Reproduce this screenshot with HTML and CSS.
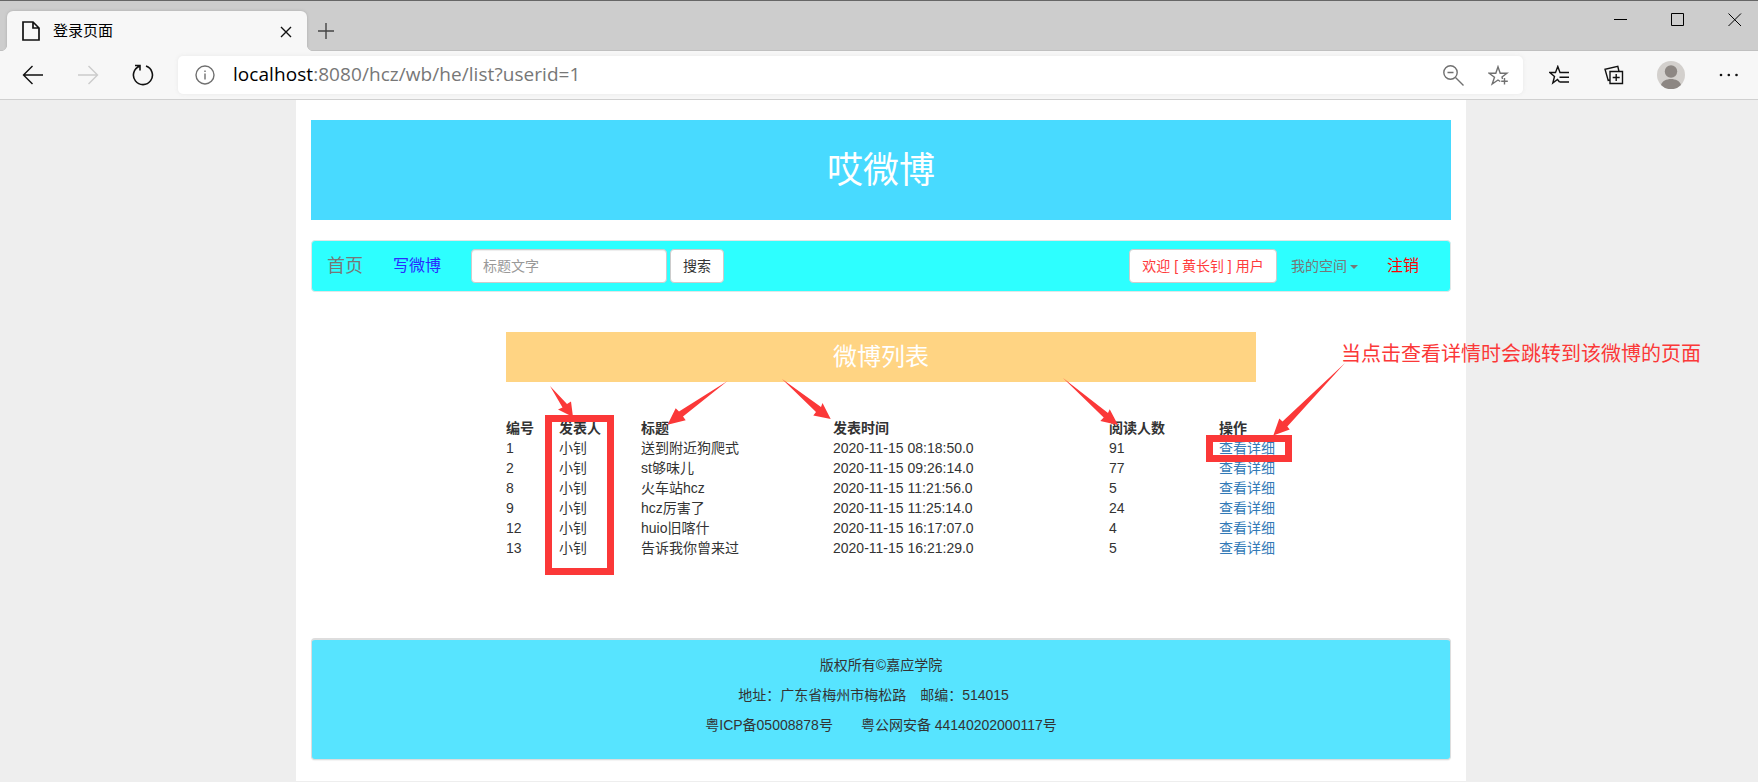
FILE: index.html
```html
<!DOCTYPE html>
<html lang="zh-CN">
<head>
	<meta charset="UTF-8">
	<title>登录页面</title>
	<link rel="stylesheet" href="styles.css">
</head>
<body>

	<!-- browser window -->
	<div class="tabbar">
		<div class="tab">
			<svg class="tab-file" width="18" height="20" viewBox="0 0 18 20"><path d="M1 1h10l6 6v12H1zM11 1v6h6"/></svg>
			<span class="tab-title">登录页面</span>
			<svg class="tab-close" width="12" height="12" viewBox="0 0 12 12"><path d="M1 1l10 10M11 1L1 11"/></svg>
		</div>
		<svg class="tab-new" width="18" height="18" viewBox="0 0 18 18"><path d="M9 1v16M1 9h16"/></svg>
		<div class="win-buttons">
			<svg width="14" height="14" viewBox="0 0 14 14"><path d="M0 6.5h13"/></svg>
			<svg width="14" height="14" viewBox="0 0 14 14"><path d="M.5 .5h12v12H.5z"/></svg>
			<svg width="14" height="14" viewBox="0 0 14 14"><path d="M.5 .5l12.5 12.5M13 .5L.5 13"/></svg>
		</div>
	</div>

	<div class="toolbar">
		<svg class="btn-back" width="22" height="20" viewBox="0 0 22 20"><path d="M21 10H1.500M10.500 1l-9 9 9 9"/></svg>
		<svg class="btn-forward" width="22" height="20" viewBox="0 0 22 20"><path d="M0 10h19.500M10.500 1l9 9-9 9"/></svg>
		<svg class="btn-reload" width="22" height="22" viewBox="0 0 22 22"><path d="M14 2.100A9.500 9.500 0 1 1 7.600 2.200M3 1.500h5v5"/></svg>
		<div class="address">
			<svg class="ico-info" width="20" height="20" viewBox="0 0 20 20"><circle cx="10" cy="10" r="9"/><path d="M10 8.500v6M10 5.500v1.500"/></svg>
			<span class="url"><b>localhost</b>:8080/hcz/wb/he/list?userid=1</span>
			<svg class="ico-zoom" width="21" height="21" viewBox="0 0 21 21"><circle cx="7.500" cy="7.500" r="6.700"/><path d="M12.500 12.500l8 8M4.500 7.500h6"/></svg>
			<svg class="ico-star" width="21" height="21" viewBox="0 0 21 21"><path d="M12.300 16.500L10 15 4.200 19 6.500 12.300 1 8.200H7.800L10 1.800 12.200 8.200H19L14 12l.5 2M16.500 13v6.500M13.200 16.300h6.600"/></svg>
		</div>
		<svg class="ico-fav" width="21" height="20" viewBox="0 0 21 20"><path d="M10.500 17L8.500 14.500 3.800 18l1.700-6.500L.8 7.500h5.700L8.800 1.500l2.200 6H20M10.500 12.200H20M10.500 17H20"/></svg>
		<svg class="ico-coll" width="20" height="20" viewBox="0 0 20 20"><path d="M6 6.500h12.500v12H6zM12.200 9v7M8.700 12.500h7M15 6.500L13.800 1.300 1 4.300 4.200 15.500 6 15"/></svg>
		<svg class="ico-user" width="28" height="28" viewBox="0 0 28 28"><circle cx="14" cy="14" r="14" fill="#d3d0cd"/><circle cx="14" cy="10.500" r="6.200" fill="#8d8783"/><path d="M4 24C6 16 22 16 24 24A14 14 0 0 1 4 24z" fill="#8d8783"/></svg>
		<svg class="ico-more" width="20" height="4" viewBox="0 0 20 4"><circle cx="2" cy="2" r="1.300"/><circle cx="9.800" cy="2" r="1.300"/><circle cx="17.500" cy="2" r="1.300"/></svg>
	</div>

	<div class="container">
		<div class="header">哎微博</div>

		<div class="navbar">
			<a class="brand">首页</a>
			<a class="write">写微博</a>
			<input type="text" class="form-control" placeholder="标题文字">
			<button class="btn">搜索</button>
			<button class="btn welcome">欢迎 [ 黄长钊 ] 用户</button>
			<a class="dropdown">我的空间<span class="caret"></span></a>
			<a class="logout">注销</a>
		</div>

		<div class="list">
			<div class="list-title">微博列表</div>
			<table>
				<tr><th class="c1">编号</th><th class="c2">发表人</th><th class="c3">标题</th><th class="c4">发表时间</th><th class="c5">阅读人数</th><th class="c6">操作</th></tr>
				<tr><td>1</td><td>小钊</td><td>送到附近狗爬式</td><td>2020-11-15 08:18:50.0</td><td>91</td><td><a>查看详细</a></td></tr>
				<tr><td>2</td><td>小钊</td><td>st够味儿</td><td>2020-11-15 09:26:14.0</td><td>77</td><td><a>查看详细</a></td></tr>
				<tr><td>8</td><td>小钊</td><td>火车站hcz</td><td>2020-11-15 11:21:56.0</td><td>5</td><td><a>查看详细</a></td></tr>
				<tr><td>9</td><td>小钊</td><td>hcz厉害了</td><td>2020-11-15 11:25:14.0</td><td>24</td><td><a>查看详细</a></td></tr>
				<tr><td>12</td><td>小钊</td><td>huio旧喀什</td><td>2020-11-15 16:17:07.0</td><td>4</td><td><a>查看详细</a></td></tr>
				<tr><td>13</td><td>小钊</td><td>告诉我你曾来过</td><td>2020-11-15 16:21:29.0</td><td>5</td><td><a>查看详细</a></td></tr>
			</table>
		</div>

		<div class="footer">
			<p>版权所有©嘉应学院</p>
			<p class="addr">地址：广东省梅州市梅松路　邮编：514015</p>
			<p>粤ICP备05008878号　　粤公网安备 44140202000117号</p>
		</div>
	</div>

	<!-- red notes over the page -->
	<svg class="marks" width="1758" height="782" viewBox="0 0 1758 782">
		<path d="M550 386L567 404 571 401.500 573 417 558 409.500 562.500 407.500z"/>
		<path d="M727.500 381L683 416.500 685.700 420.300 667.500 424.700 675.700 408.300 679 411.500z"/>
		<path d="M782 379L821 407 822.500 403 830.700 419 813.300 415.500 816 412z"/>
		<path d="M1063 378L1108 413 1109.700 409.300 1118 425 1100.300 421 1103.700 417.500z"/>
		<path d="M1345 363L1287.300 426.500 1289.700 429.500 1273.300 435.500 1279.300 418.500 1282.500 421.500z"/>
		<rect x="548.500" y="418.500" width="62" height="153"/>
		<rect x="1209.500" y="438.500" width="79" height="20"/>
	</svg>
	<div class="note">当点击查看详情时会跳转到该微博的页面</div>

</body>
</html>
```
FILE: styles.css
```css
* {
	box-sizing: border-box;
}

body {
	margin: 0;
	height: 782px;
	overflow: hidden;
	position: relative;
	background: #eee;
	color: #333;
	font-family: "Liberation Sans", "Noto Sans CJK SC", sans-serif;
	font-size: 14px;
	line-height: 20px;
}

svg {
	display: block;
	flex: none;
	fill: none;
	stroke: #111;
	stroke-width: 1.4;
}

/* browser */
.tabbar {
	display: flex;
	height: 51px;
	padding: 10px 16px 0 7px;
	background: #cdcdcd;
	border-top: 1px solid #666;
	box-shadow: inset 0 -1px 0 #c0c0c0;
}

.tab {
	display: flex;
	position: relative;
	width: 300px;
	padding: 0 15px;
	background: #f7f7f7;
	border-radius: 6px 6px 0 0;
	box-shadow: 0 0 3px #aaa;
}

/* rounded feet of the tab */
.tab::before,
.tab::after {
	content: "";
	position: absolute;
	bottom: 0;
	width: 5px;
	height: 5px;
}

.tab::before {
	left: -5px;
	background: radial-gradient(circle at 0 0, transparent 4.500px, #f7f7f7 5px);
}

.tab::after {
	right: -5px;
	background: radial-gradient(circle at 100% 0, transparent 4.500px, #f7f7f7 5px);
}

.tab-file {
	margin-top: 10px;
	stroke-width: 1.7;
}

.tab-title {
	flex: 1;
	margin: 10px 0 0 13px;
	color: #000;
	font-size: 15px;
}

.tab-close {
	margin-top: 15px;
}

.tab-new {
	margin: 11px 0 0 10px;
	stroke: #444;
}

.win-buttons {
	display: flex;
	gap: 43px;
	margin: 2px 0 0 auto;
}

.win-buttons svg {
	stroke: #000;
	stroke-width: 1;
}

.toolbar {
	display: flex;
	align-items: center;
	height: 49px;
	padding: 0 0 0 22px;
	background: #f7f7f7;
	border-bottom: 1px solid #d0d0d0;
	position: relative;
}

.btn-forward {
	margin-left: 34px;
	stroke: #ccc;
}

.btn-reload {
	margin-left: 32px;
	stroke-width: 1.6;
}

.address {
	display: flex;
	flex: none;
	align-items: center;
	width: 1345px;
	height: 38px;
	margin-left: 24px;
	padding: 0 14px 0 17px;
	background: #fff;
	border-radius: 5px;
	box-shadow: 0 0 4px #e8e8e8;
}

.address svg {
	stroke: #707070;
}

.url {
	flex: 1;
	margin: -2px 0 0 18px;
	color: #777;
	font-family: "Open Sans", sans-serif;
	font-size: 19px;
	letter-spacing: .06px;
	line-height: 26px;
}

.url b {
	color: #000;
	font-weight: normal;
}

.ico-star {
	margin-left: 24px;
}

.ico-fav {
	margin-left: 26px;
}

.ico-coll {
	margin-left: 34px;
}

.ico-user {
	margin-left: 33px;
	stroke: none;
}

.ico-more {
	margin-left: 34px;
	fill: #111;
	stroke: none;
}

/* page */
.container {
	width: 1170px;
	height: 681px;
	margin-left: 296px;
	padding: 20px 15px;
	background: #fff;
}

.header {
	height: 100px;
	background: #48daff;
	color: #fff;
	font-size: 36px;
	line-height: 101px;
	text-align: center;
}

.navbar {
	display: flex;
	align-items: center;
	height: 52px;
	margin-top: 20px;
	padding: 0 31px 0 15px;
	background: #2dffff;
	border: 1px solid #e0e7e7;
	border-radius: 4px;
}

.brand {
	width: 66px;
	color: #777;
	font-size: 18px;
}

.write {
	width: 78px;
	color: #2a2aff;
	font-size: 16px;
}

.form-control {
	width: 196px;
	height: 34px;
	padding: 6px 11px;
	border: 1px solid #ccc;
	border-radius: 4px;
	box-shadow: inset 0 1px 1px rgba(0, 0, 0, .075);
	font: inherit;
}

.form-control::placeholder {
	color: #999;
}

.btn {
	height: 34px;
	margin-left: 3px;
	padding: 6px 12px;
	background: #fff;
	border: 1px solid #ccc;
	border-radius: 4px;
	color: #333;
	font: inherit;
	line-height: 20px;
}

.welcome {
	width: 148px;
	margin-left: auto;
	padding: 6px 0;
	color: #ff3b3b;
}

.dropdown {
	margin-left: 14px;
	color: #777;
}

.caret {
	display: inline-block;
	margin-left: 3px;
	vertical-align: middle;
	border-top: 4px solid #777;
	border-left: 4px solid transparent;
	border-right: 4px solid transparent;
}

.logout {
	margin-left: 29px;
	color: #f00;
	font-size: 16px;
}

.list {
	width: 750px;
	height: 306px;
	margin: 40px 0 0 195px;
}

.list-title {
	height: 50px;
	margin-bottom: 36px;
	background: #ffd483;
	color: #fff;
	font-size: 24px;
	line-height: 50px;
	text-align: center;
}

table {
	width: 780px;
	table-layout: fixed;
	border-collapse: collapse;
}

th,
td {
	height: 20px;
	padding: 0;
	text-align: left;
}

td a {
	color: #337ab7;
}

.c1 { width: 53px; }
.c2 { width: 82px; }
.c3 { width: 192px; }
.c4 { width: 276px; }
.c5 { width: 110px; }

.footer {
	height: 122px;
	padding-top: 15px;
	background: #57e4ff;
	border: 1px solid #ddd;
	border-top-width: 2px;
	border-radius: 4px;
	box-shadow: 0 1px 1px rgba(0, 0, 0, .05);
	text-align: center;
}

.footer p {
	margin: 0 0 10px;
}

.footer .addr {
	padding-right: 15px;
}

/* notes */
.marks {
	position: absolute;
	top: 0;
	left: 0;
	fill: #fb3838;
	stroke: none;
}

.marks rect {
	fill: none;
	stroke: #fb3838;
	stroke-width: 7;
}

.note {
	position: absolute;
	top: 340px;
	left: 1341px;
	color: #fb3838;
	font-size: 20px;
	line-height: 28px;
	white-space: nowrap;
}
```
